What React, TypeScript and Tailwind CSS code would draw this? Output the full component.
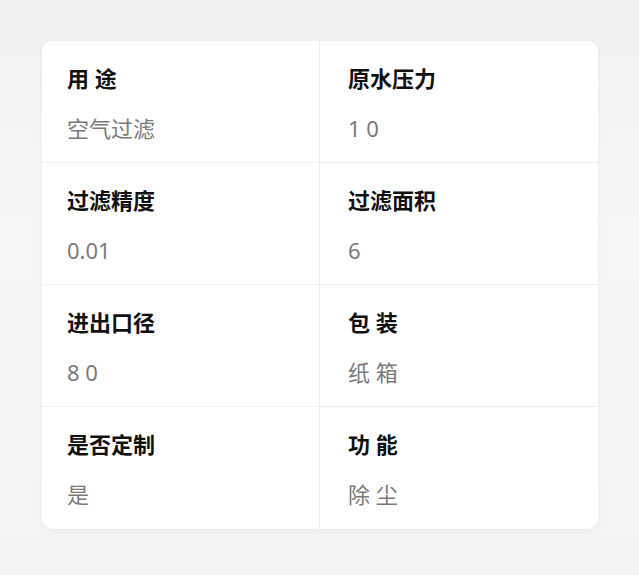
import React from 'react';

const specs = [
  { label: '用 途', value: '空气过滤' },
  { label: '原水压力', value: '1 0' },
  { label: '过滤精度', value: '0.01' },
  { label: '过滤面积', value: '6' },
  { label: '进出口径', value: '8 0' },
  { label: '包 装', value: '纸 箱' },
  { label: '是否定制', value: '是' },
  { label: '功 能', value: '除 尘' },
];

const App = () => {
  return (
    <div
      className="min-h-[575px] w-full bg-[linear-gradient(180deg,#f0f0f0_0%,#f6f6f6_40%,#f3f3f3_100%)] px-[42px] pt-[41px]"
      style={{ fontFamily: '"Noto Sans", "Noto Sans CJK SC", sans-serif' }}
    >
      <div className="grid w-[556px] grid-cols-2 overflow-hidden rounded-[10px] bg-white shadow-[0_1px_4px_rgba(0,0,0,0.05)]">
        {specs.map((item, i) => (
          <div
            key={i}
            className={`h-[122px] pt-[21px] ${i % 2 === 0 ? 'border-r border-[#efefef] pl-[25px]' : 'pl-[28px]'} ${i < 6 ? 'border-b border-[#ececec]' : ''}`}
          >
            <h3 className="text-[22px] font-bold leading-[32px] text-[#111]">{item.label}</h3>
            <p className="mt-[18px] text-[22px] leading-[32px] text-[#7a7a7a]">{item.value}</p>
          </div>
        ))}
      </div>
    </div>
  );
};

export default App;
